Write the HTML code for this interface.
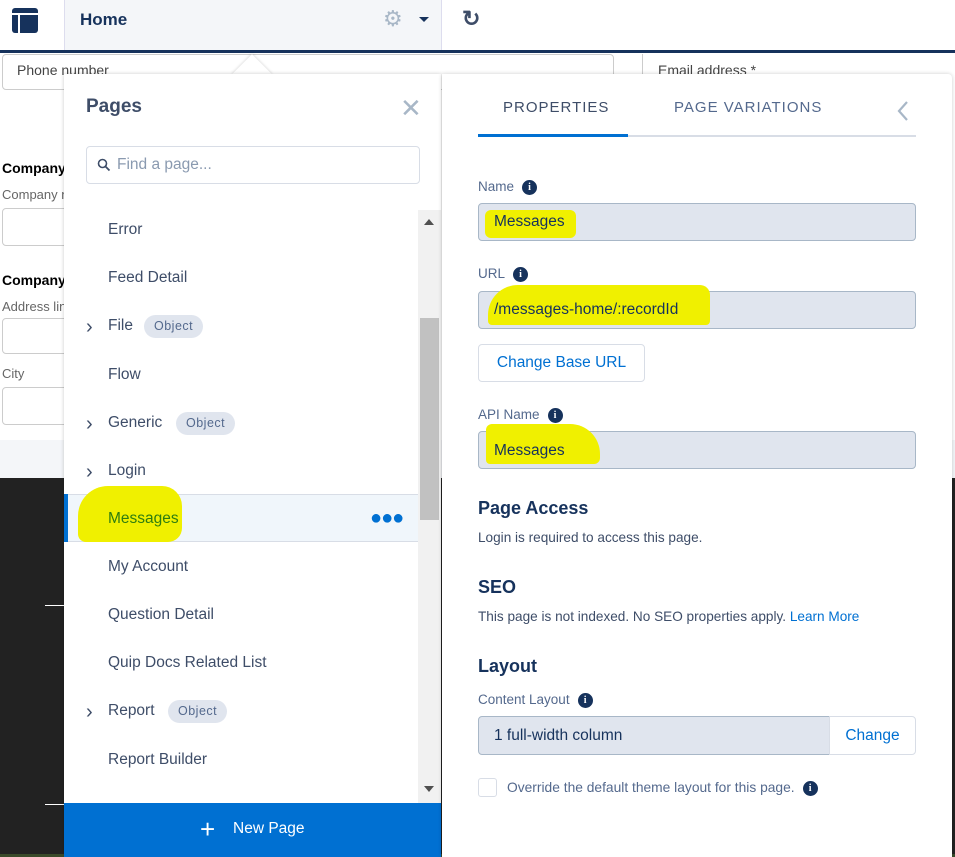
<!DOCTYPE html>
<html><head><style>
*{box-sizing:border-box;margin:0;padding:0}
body{width:955px;height:857px;overflow:hidden;position:relative;font-family:"Liberation Sans",sans-serif;background:#fff;color:#16325c}
.a{position:absolute}
.item{position:absolute;left:108px;font-size:15.5px;color:#3e4d68}
.chev{position:absolute;left:86px;font-size:20px;color:#3e4d68;line-height:18px}
.badge{position:absolute;height:23px;border-radius:12px;background:#e0e5ee;font-size:12.5px;color:#54698d;padding:0 10px;line-height:23px;letter-spacing:.5px}
.lab{position:absolute;left:478px;font-size:13.5px;color:#54698d}
.info{display:inline-block;width:15px;height:15px;border-radius:50%;background:#16325c;color:#fff;font-size:10px;font-weight:bold;text-align:center;line-height:15px;vertical-align:1px;margin-left:8px;font-family:"Liberation Serif",serif}
.inp{position:absolute;left:478px;width:438px;height:38px;border:1px solid #a8b7c7;border-radius:4px;background:#e0e5ee;font-size:15px;color:#16325c;padding-left:15px;line-height:36px}
.hl{position:absolute;background:#f0f000;border-radius:6px}
.h{position:absolute;left:478px;font-size:18px;font-weight:bold;color:#16325c}
.p{position:absolute;left:478px;font-size:13.6px;color:#3e4d68}
</style></head><body>
<div class="a" style="left:0;top:0;width:955px;height:50px;background:#fff"></div>
<div class="a" style="left:12px;top:8px;width:26px;height:25px;background:#16325c;border-radius:3px"></div>
<div class="a" style="left:12px;top:13px;width:26px;height:2px;background:#fff"></div>
<div class="a" style="left:18px;top:15px;width:2px;height:18px;background:#fff"></div>
<div class="a" style="left:64px;top:0;width:377px;height:50px;background:#f4f6f9;border-left:1px solid #dde"></div>
<div class="a" style="left:80px;top:10px;font-size:17px;font-weight:bold;color:#16325c">Home</div>
<div class="a" style="left:383px;top:6px;font-size:22px;color:#a8b7c7">⚙</div>
<div class="a" style="left:419px;top:17px;width:0;height:0;border-left:5px solid transparent;border-right:5px solid transparent;border-top:5px solid #16325c"></div>
<div class="a" style="left:441px;top:0;width:1px;height:50px;background:#dde"></div>
<div class="a" style="left:462px;top:6px;font-size:22px;font-weight:bold;color:#3e4d68">↻</div>
<div class="a" style="left:0;top:50px;width:955px;height:3px;background:#16325c"></div>
<div class="a" style="left:2px;top:54px;width:612px;height:36px;border:1px solid #ccc;border-radius:4px"></div>
<div class="a" style="left:17px;top:62px;font-size:14px;color:#444">Phone number</div>
<div class="a" style="left:642px;top:54px;width:1px;height:20px;background:#ccc"></div>
<div class="a" style="left:658px;top:62px;font-size:14px;color:#444">Email address *</div>
<div class="a" style="left:2px;top:160px;font-size:14px;font-weight:bold;color:#000">Company</div>
<div class="a" style="left:2px;top:187px;font-size:13px;color:#666">Company n</div>
<div class="a" style="left:2px;top:208px;width:80px;height:38px;border:1px solid #ccc;border-radius:4px"></div>
<div class="a" style="left:2px;top:272px;font-size:14px;font-weight:bold;color:#000">Company</div>
<div class="a" style="left:2px;top:299px;font-size:13px;color:#666">Address lin</div>
<div class="a" style="left:2px;top:318px;width:80px;height:36px;border:1px solid #ccc;border-radius:4px"></div>
<div class="a" style="left:2px;top:366px;font-size:13px;color:#666">City</div>
<div class="a" style="left:2px;top:387px;width:80px;height:38px;border:1px solid #ccc;border-radius:4px"></div>
<div class="a" style="left:0;top:440px;width:955px;height:38px;background:#f4f6f9"></div>
<div class="a" style="left:0;top:478px;width:955px;height:379px;background:#222"></div>
<div class="a" style="left:45px;top:605px;width:25px;height:1px;background:#fff"></div>
<div class="a" style="left:45px;top:804px;width:25px;height:1px;background:#fff"></div>
<div class="a" style="left:0;top:854px;width:955px;height:3px;background:#3a4a2a"></div>
<div class="a" style="left:238px;top:60px;width:28px;height:28px;background:#fff;transform:rotate(45deg);box-shadow:0 0 3px rgba(0,0,0,.2)"></div>
<div class="a" style="left:64px;top:74px;width:377px;height:783px;background:#fff;box-shadow:0 0 4px rgba(0,0,0,.2)"></div>
<div class="a" style="left:86px;top:96px;font-size:19px;font-weight:bold;color:#3e4d68">Pages</div>
<div class="a" style="left:400px;top:93px;font-size:26px;color:#a8b7c7;line-height:30px">✕</div>
<div class="a" style="left:86px;top:146px;width:334px;height:38px;border:1px solid #d8dde6;border-radius:4px"></div>
<svg class="a" style="left:97px;top:158px" width="14" height="14"><circle cx="5.5" cy="5.5" r="4" fill="none" stroke="#3e4d68" stroke-width="1.6"/><path d="M8.5 8.5L12.5 12.5" stroke="#3e4d68" stroke-width="1.8"/></svg>
<div class="a" style="left:117px;top:156px;font-size:15.5px;color:#8a9ab0">Find a page...</div>
<div class="item" style="top:221px">Error</div>
<div class="item" style="top:269px">Feed Detail</div>
<div class="chev" style="top:318px">›</div><div class="item" style="top:317px">File</div><div class="badge" style="left:144px;top:315px">Object</div>
<div class="item" style="top:366px">Flow</div>
<div class="chev" style="top:415px">›</div><div class="item" style="top:414px">Generic</div><div class="badge" style="left:176px;top:412px">Object</div>
<div class="chev" style="top:463px">›</div><div class="item" style="top:462px">Login</div>
<div class="a" style="left:64px;top:494px;width:354px;height:48px;background:#f0f6fb;border-top:1px solid #d8dde6;border-bottom:1px solid #d8dde6"></div>
<div class="a" style="left:64px;top:494px;width:4px;height:48px;background:#0070d2"></div>
<div class="hl" style="left:78px;top:486px;width:104px;height:56px;border-radius:30px 20px 14px 8px"></div>
<div class="item" style="top:510px;color:#2e7d10">Messages</div>
<div class="a" style="left:370px;top:508px;font-size:20px;color:#0070d2;letter-spacing:-1px;line-height:20px">●●●</div>
<div class="item" style="top:558px">My Account</div>
<div class="item" style="top:606px">Question Detail</div>
<div class="item" style="top:654px">Quip Docs Related List</div>
<div class="chev" style="top:703px">›</div><div class="item" style="top:702px">Report</div><div class="badge" style="left:168px;top:700px">Object</div>
<div class="item" style="top:751px">Report Builder</div>
<div class="a" style="left:418px;top:210px;width:23px;height:593px;background:#f1f1f1"></div>
<div class="a" style="left:420px;top:318px;width:19px;height:202px;background:#c1c1c1"></div>
<div class="a" style="left:424px;top:219px;border-left:5px solid transparent;border-right:5px solid transparent;border-bottom:6px solid #505050"></div>
<div class="a" style="left:424px;top:786px;border-left:5px solid transparent;border-right:5px solid transparent;border-top:6px solid #505050"></div>
<div class="a" style="left:64px;top:803px;width:377px;height:54px;background:#0070d2"></div>
<div class="a" style="left:200px;top:815px;font-size:26px;color:#fff;line-height:28px">+</div>
<div class="a" style="left:233px;top:820px;font-size:15.5px;color:#fff">New Page</div>
<div class="a" style="left:442px;top:74px;width:510px;height:783px;background:#fff;border-radius:0 4px 0 0;box-shadow:0 0 4px rgba(0,0,0,.2)"></div>
<div class="a" style="left:503px;top:99px;font-size:15px;letter-spacing:1px;color:#3e4d68">PROPERTIES</div>
<div class="a" style="left:674px;top:99px;font-size:15px;letter-spacing:1px;color:#54698d">PAGE VARIATIONS</div>
<svg class="a" style="left:896px;top:100px" width="14" height="22"><path d="M11 2L3 11L11 20" fill="none" stroke="#a8b7c7" stroke-width="2.2"/></svg>
<div class="a" style="left:478px;top:135px;width:438px;height:2px;background:#d8dde6"></div>
<div class="a" style="left:478px;top:134px;width:150px;height:3px;background:#0070d2"></div>
<div class="lab" style="top:179px">Name<span class="info">i</span></div>
<div class="inp" style="top:203px"></div>
<div class="hl" style="left:485px;top:210px;width:91px;height:28px"></div>
<div class="a" style="left:494px;top:213px;font-size:15.5px;color:#16325c">Messages</div>
<div class="lab" style="top:266px">URL<span class="info">i</span></div>
<div class="inp" style="top:291px"></div>
<div class="hl" style="left:488px;top:285px;width:222px;height:40px;border-radius:30px 10px 4px 4px"></div>
<div class="a" style="left:494px;top:301px;font-size:15.5px;color:#16325c">/messages-home/:recordId</div>
<div class="a" style="left:478px;top:344px;width:167px;height:38px;border:1px solid #d8dde6;border-radius:4px;font-size:15.5px;color:#0070d2;text-align:center;line-height:36px">Change Base URL</div>
<div class="lab" style="top:407px">API Name<span class="info">i</span></div>
<div class="inp" style="top:431px"></div>
<div class="hl" style="left:486px;top:424px;width:114px;height:40px;border-radius:6px 30px 6px 4px"></div>
<div class="a" style="left:494px;top:442px;font-size:15.5px;color:#16325c">Messages</div>
<div class="h" style="top:498px">Page Access</div>
<div class="p" style="top:530px">Login is required to access this page.</div>
<div class="h" style="top:577px">SEO</div>
<div class="p" style="top:609px">This page is not indexed. No SEO properties apply. <span style="color:#0070d2">Learn More</span></div>
<div class="h" style="top:656px">Layout</div>
<div class="lab" style="top:692px">Content Layout<span class="info">i</span></div>
<div class="a" style="left:478px;top:716px;width:352px;height:39px;border:1px solid #a8b7c7;border-radius:4px 0 0 4px;background:#e0e5ee;font-size:15.5px;color:#16325c;padding-left:15px;line-height:37px">1 full-width column</div>
<div class="a" style="left:829px;top:716px;width:87px;height:39px;border:1px solid #d8dde6;border-radius:0 4px 4px 0;font-size:15.5px;color:#0070d2;text-align:center;line-height:37px">Change</div>
<div class="a" style="left:478px;top:778px;width:19px;height:19px;border:1px solid #d8dde6;border-radius:3px"></div>
<div class="a" style="left:507px;top:780px;font-size:13.8px;color:#54698d">Override the default theme layout for this page.<span class="info">i</span></div>
</body></html>
